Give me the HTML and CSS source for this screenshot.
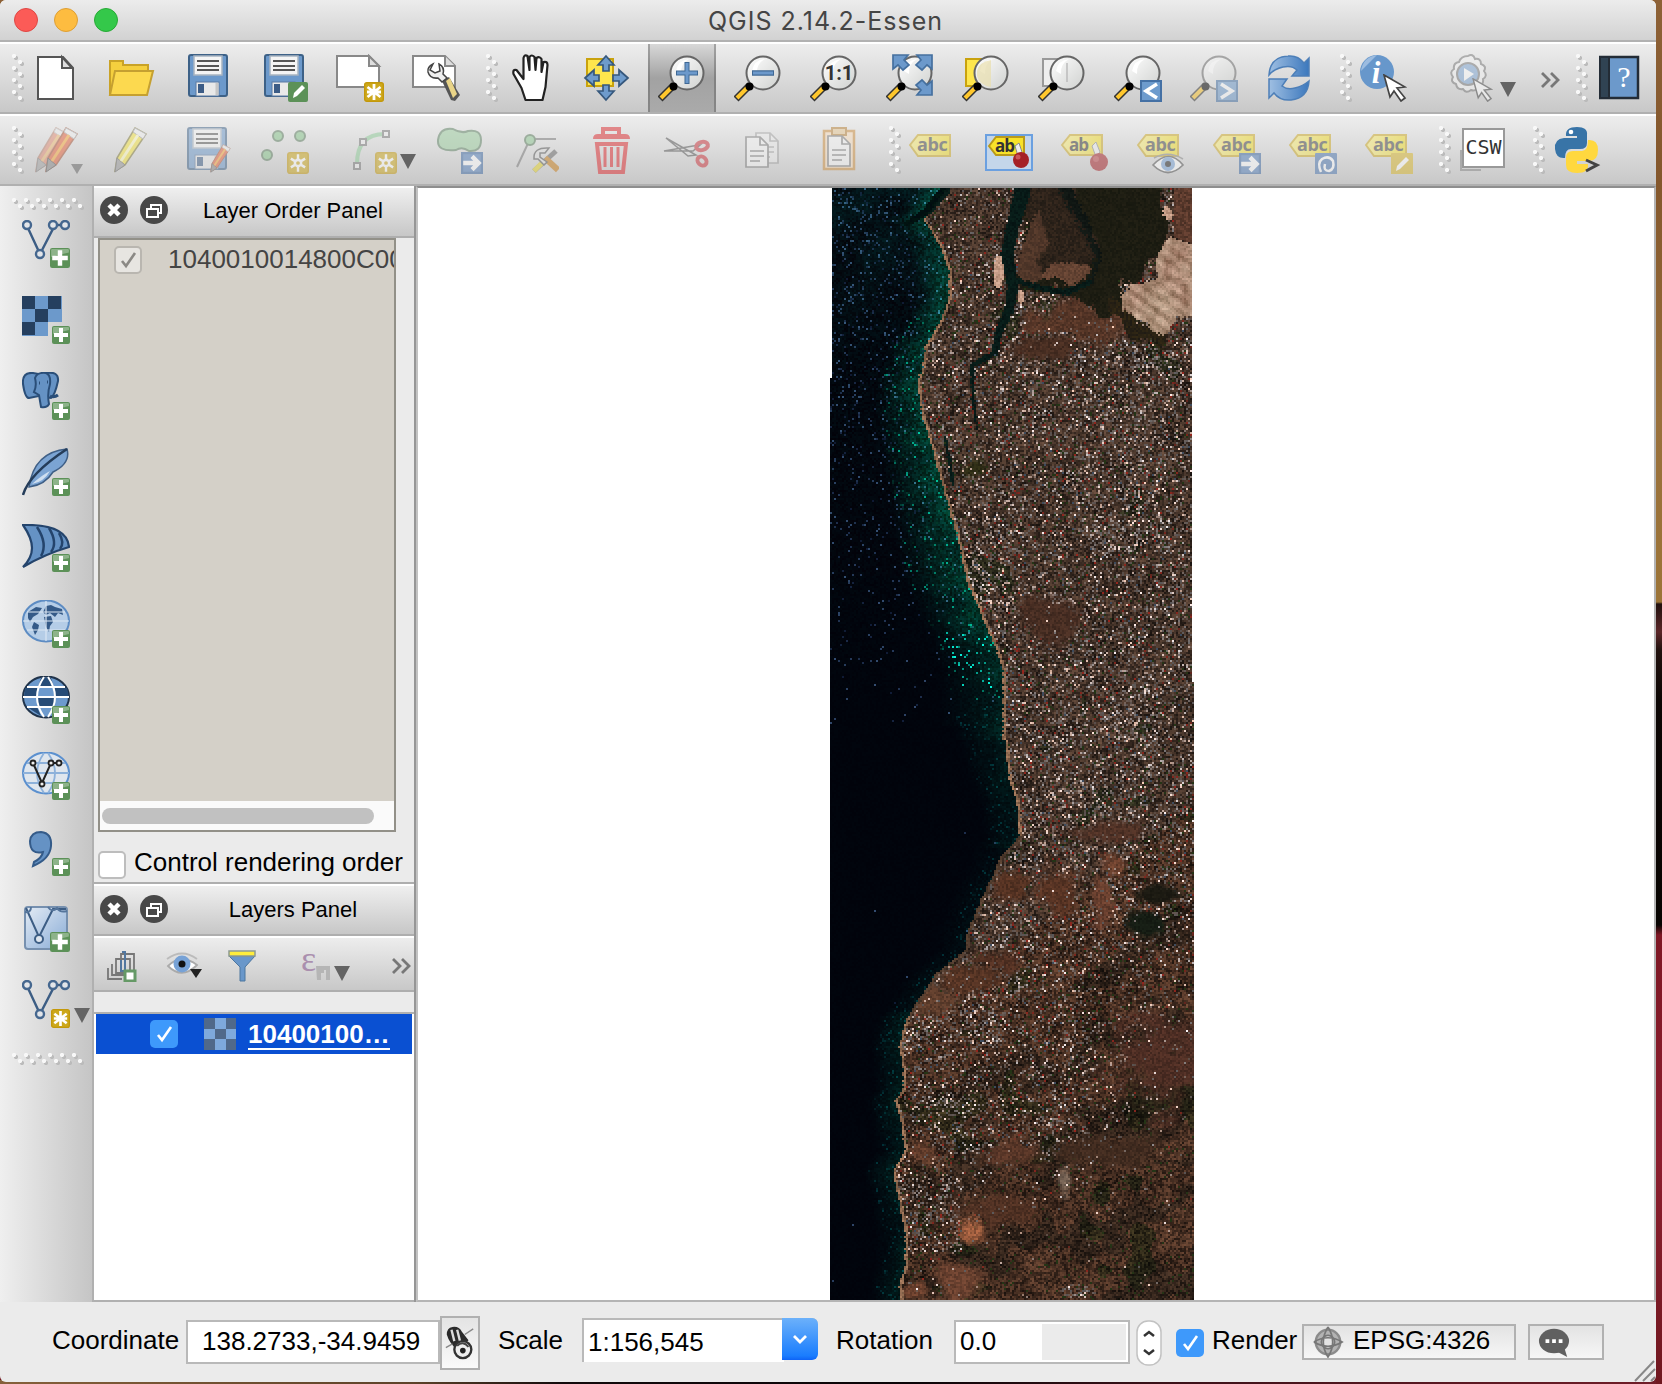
FILE: index.html
```
<!DOCTYPE html>
<html lang="en">
<head>
<meta charset="utf-8">
<title>QGIS 2.14.2-Essen</title>
<link rel="stylesheet" href="styles.css">
</head>
<body>
<svg class="sprite" aria-hidden="true">
  <defs>
    <linearGradient id="lens" x1="0" y1="0" x2="1" y2="1"><stop offset="0" stop-color="#fff"/><stop offset="1" stop-color="#cfd1cf"/></linearGradient>
    <linearGradient id="labelFill" x1="0" y1="0" x2="1" y2="0"><stop offset="0" stop-color="#fbee7e"/><stop offset="1" stop-color="#f2dc22"/></linearGradient>
    <linearGradient id="sky" x1="0" y1="0" x2="1" y2="1"><stop offset="0" stop-color="#e4ecf5"/><stop offset="1" stop-color="#88abd6"/></linearGradient>
    <linearGradient id="arrowBlue" x1="0" y1="0" x2="1" y2="0"><stop offset="0" stop-color="#9fbfe2"/><stop offset="1" stop-color="#3c78bd"/></linearGradient>
  </defs>
  <symbol id="badge-plus" viewBox="0 0 18 18"><rect width="18" height="18" rx="2" fill="#5c9158"/><path d="M1 8V2q0-1 1-1h14q1 0 1 1v2z" fill="#8db38a"/><path d="M9 2v14M2 9h14" stroke="#fff" stroke-width="4"/></symbol>
  <symbol id="badge-star" viewBox="0 0 20 20"><rect x=".7" y=".7" width="18.600" height="18.600" rx="2" fill="#cda81c" stroke="#c3980a" stroke-width="1.400"/><path d="M10 2v16M3.500 5l13 10M16.500 5l-13 10M3 10h14" stroke="#fff" stroke-width="2.800"/></symbol>
  <symbol id="badge-sun" viewBox="0 0 20 20"><rect x=".7" y=".7" width="18.600" height="18.600" rx="2" fill="#cda81c" stroke="#c3980a" stroke-width="1.400"/><path d="M10 2v16M3.500 6l13 8M16.500 6l-13 8" stroke="#fff" stroke-width="2.200"/><circle cx="10" cy="10" r="4" fill="#fff"/><circle cx="10" cy="10" r="1.700" fill="#cda81c"/></symbol>
  <symbol id="badge-right" viewBox="0 0 20 20"><rect x="1" y="1" width="18" height="18" fill="#5480bb" stroke="#3d68a2" stroke-width="2"/><path d="M2 10h13M10 4l6 6-6 6" fill="none" stroke="#fff" stroke-width="4"/></symbol>
  <symbol id="glass" viewBox="0 0 48 48"><path d="M2 45L16 31" stroke="#333" stroke-width="7"/><path d="M3 44L13 34" stroke="#ffc72c" stroke-width="4"/><circle cx="29" cy="19" r="16.500" fill="url(#lens)" stroke="#666" stroke-width="2"/><path d="M18 17q2-11 13-12-9 5-8 15z" fill="#fff"/><circle cx="15.500" cy="32.500" r="4" fill="#000"/></symbol>
  <symbol id="floppy" viewBox="0 0 48 48"><rect x="5" y="1" width="38" height="41" rx="2" fill="#6c99cb" stroke="#3d6187" stroke-width="2"/><rect x="10" y="2" width="28" height="19" fill="#f4f4f4" stroke="#a8b4c1" stroke-width="1.500"/><path d="M13 7h22M13 12h22M13 16h22" stroke="#555" stroke-width="2"/><rect x="12" y="28" width="23" height="14" fill="#e9e9e9" stroke="#5a7ba3"/><rect x="14" y="30" width="6" height="9" fill="#3c5c86"/><path d="M33 29v12" stroke="#c6c6c6" stroke-width="3"/></symbol>

  <symbol id="new" viewBox="0 0 48 48"><path d="M6 3h25l10 11v31H6z" fill="#fff" stroke="#555" stroke-width="2"/><path d="M30 3v11h10z" fill="#ddd" stroke="#555" stroke-width="2"/></symbol>
  <symbol id="open" viewBox="0 0 48 48"><path d="M2 41V7h13v4h25v7" fill="#f5cf3e" stroke="#c9a227" stroke-width="2"/><path d="M7 17h38l-6 24H2z" fill="#fcd94f" stroke="#c5a031" stroke-width="2"/></symbol>
  <symbol id="saveas" viewBox="0 0 48 48"><use href="#floppy"/><rect x="28" y="28" width="20" height="20" rx="2" fill="#5c9158"/><path d="M33 44l1-5 8-8 3 3-8 8z" fill="#fff"/></symbol>
  <symbol id="composer" viewBox="0 0 48 48"><path d="M1 2h32l10 10v21H1z" fill="#fff" stroke="#888" stroke-width="2"/><path d="M33 2v10h10z" fill="#ddd" stroke="#888" stroke-width="2"/><use href="#badge-star" x="28" y="28" width="20" height="20"/></symbol>
  <symbol id="manager" viewBox="0 0 48 48"><path d="M1 2h32l10 10v21H1z" fill="#fff" stroke="#888" stroke-width="2"/><path d="M33 2v10h10" fill="#ddd" stroke="#888" stroke-width="2"/><path d="M30 27l7-4 11 18-5 6-4-1z" fill="#555"/><path d="M34 27l4-3 7 16-4 4z" fill="#e9d487"/><path d="M21 10q-6 3-5 8 2 7 10 6l4 4 5-4-4-4q2-7-4-10l1 7-5 2-5-3z" fill="#eee" stroke="#444" stroke-width="1.500"/></symbol>
  <symbol id="hand" viewBox="0 0 48 48"><path transform="translate(2.500 0)" d="M17 46l-4-12-8-14q-1-5 3-4l7 9V4q1-4 4-2l2 14V3q2-3 5 0l1 13 1-12q3-2 5 1v13l2-10q4-1 4 3l-2 22-3 13z" fill="#fff" stroke="#222" stroke-width="2.200" stroke-linejoin="round"/></symbol>
  <symbol id="pan" viewBox="0 0 48 48"><rect x="5" y="5" width="26" height="27" fill="#fee64d" stroke="#c9a20d" stroke-width="2"/><g fill="#6e9bcc" stroke="#36587d" stroke-width="1.700"><path d="M24 2l8 9h-5v6h-6v-6h-5z"/><path d="M24 46l8-9h-5v-6h-6v6h-5z"/><path d="M3 24l9-8v5h5v6h-5v5z"/><path d="M46 24l-9-8v5h-6v6h6v5z"/></g></symbol>
  <symbol id="zoomin" viewBox="0 0 48 48"><use href="#glass"/><path d="M29 8v22M18 19h22" stroke="#3f6894" stroke-width="5"/><path d="M29 9v20M19 19h20" stroke="#6c99cb" stroke-width="3"/></symbol>
  <symbol id="zoomout" viewBox="0 0 48 48"><use href="#glass"/><path d="M18 19h22" stroke="#3f6894" stroke-width="5.500"/><path d="M19 19h20" stroke="#6c99cb" stroke-width="3"/></symbol>
  <symbol id="zoomfull" viewBox="0 0 48 48"><use href="#glass"/><g fill="#6c99cb" stroke="#45709f" stroke-width="1.700"><path d="M7 1h15l-4 5 5 5-6 5-5-5-5 4z"/><path d="M46 1H31l4 5-5 5 6 5 5-5 5 4z"/><path d="M46 41H31l4-5-5-5 6-5 5 5 5-4z"/></g></symbol>
  <symbol id="zoomsel" viewBox="0 0 48 48"><rect x="4" y="5" width="26" height="27" fill="#fee64d" stroke="#c9a20d" stroke-width="2"/><use href="#glass"/><path d="M15 17q2-9 14-11v27q-12-2-14-11z" fill="#e8dfb0" opacity=".75"/></symbol>
  <symbol id="zoomlayer" viewBox="0 0 48 48"><rect x="5" y="5" width="26" height="27" fill="#eee" stroke="#999" stroke-width="2"/><use href="#glass"/><path d="M29 9v19" stroke="#bbb" stroke-width="1.500"/></symbol>
  <symbol id="zoomlast" viewBox="0 0 48 48"><use href="#glass"/><rect x="27" y="27" width="20" height="20" fill="#6d9bcd" stroke="#4470a4" stroke-width="2"/><path d="M43 30l-11 7 11 7" fill="none" stroke="#fff" stroke-width="3.500"/></symbol>
  <symbol id="zoomnext" viewBox="0 0 48 48"><use href="#glass"/><rect x="27" y="27" width="20" height="20" fill="#6d9bcd" stroke="#4470a4" stroke-width="2"/><path d="M31 30l11 7-11 7" fill="none" stroke="#fff" stroke-width="3.500"/></symbol>
  <symbol id="refresh" viewBox="0 0 48 48"><path d="M3 21Q4 3 22 2q10-1 16 7l5-5v18H26l5-6q-5-5-14-3T3 21z" fill="url(#arrowBlue)" stroke="#4d7fb8" stroke-width="1.500"/><path d="M43 27Q42 44 25 46 14 47 8 39l-5 5V25h18l-5 7q5 4 13 2t14-7z" fill="url(#arrowBlue)" stroke="#4d7fb8" stroke-width="1.500"/></symbol>
  <symbol id="cursor" viewBox="0 0 24 28"><path d="M1 1l21 12-8 1 8 10-4 3-7-10-4 6z" fill="#fff" stroke="#444" stroke-width="1.700"/></symbol>
  <symbol id="identify" viewBox="0 0 48 48"><circle cx="17" cy="18" r="17" fill="#6797cb"/><path d="M1 17Q3 3 17 1q-8 8-16 16z" fill="#9cbce0"/></symbol>
  <symbol id="action" viewBox="0 0 48 48"><path d="M20 2q5-3 7 3 6-1 6 5 6 2 3 7 4 5-1 8 1 6-5 7-2 6-7 4-5 4-8-1-6 1-7-5-6-2-3-7-4-5 1-8-1-6 5-7 2-6 9-6z" fill="#f4f4f4" stroke="#777" stroke-width="2"/><circle cx="20" cy="20" r="11" fill="#7ea6d4" stroke="#777" stroke-width="2"/><path d="M16 14l10 6-10 7z" fill="#fff"/><use href="#cursor" x="24" y="24" width="21" height="24"/></symbol>
  <symbol id="help" viewBox="0 0 48 48"><rect x="1" y="3" width="38" height="41" fill="#6c99cb" stroke="#232c36" stroke-width="2.500"/><path d="M1 3h9v41H1z" fill="#304353" stroke="#232c36" stroke-width="2"/></symbol>

  <symbol id="pencil" viewBox="0 0 48 48"><path d="M26 2l11 6-21 31-10 6 2-13z" fill="#f4e33f" stroke="#817a37" stroke-width="1.500"/><path d="M26 2l11 6-3 5-10-7z" fill="#eee" stroke="#999"/><path d="M8 32l8 7-10 7z" fill="#999" stroke="#666"/><path d="M29 9L12 35" stroke="#fffbc0" stroke-width="3"/></symbol>
  <symbol id="redpencil" viewBox="0 0 48 48"><path d="M26 2l11 6-21 31-10 6 2-13z" fill="#e3603a" stroke="#a65234" stroke-width="1.500"/><path d="M26 2l11 6-3 5-10-7z" fill="#eee" stroke="#aaa"/><path d="M8 32l8 7-10 7z" fill="#888" stroke="#555"/><path d="M29 9L12 35" stroke="#f7a93a" stroke-width="3"/></symbol>
  <symbol id="edits" viewBox="0 0 48 48"><g opacity=".65"><use href="#redpencil" x="-2" y="0"/></g><use href="#redpencil" x="8"/></symbol>
  <symbol id="saveedits" viewBox="0 0 48 48"><g transform="translate(-2 1)"><use href="#floppy"/></g><use href="#redpencil" x="22" y="17" width="30" height="31"/></symbol>
  <symbol id="points" viewBox="0 0 48 48"><g fill="#86c58a" stroke="#5b7c5e" stroke-width="2"><circle cx="17" cy="10" r="5"/><circle cx="39" cy="10" r="5"/><circle cx="6" cy="29" r="5"/></g><use href="#badge-sun" x="26" y="26" width="22" height="22"/></symbol>
  <symbol id="line" viewBox="0 0 48 48"><path d="M8 38Q8 8 36 8" fill="none" stroke="#8ecb98" stroke-width="4"/><g fill="#eee" stroke="#777" stroke-width="2"><path d="M5 37h6v6H5zM11 13h6v6h-6zM34 5h6v6h-6z"/></g><use href="#badge-sun" x="26" y="26" width="22" height="22"/></symbol>
  <symbol id="blob" viewBox="0 0 48 48"><path d="M3 14Q5 1 18 3q9 5 15 2 13-2 13 9 0 12-12 11-7-5-13-1Q2 26 3 14z" fill="#9bce9e" stroke="#5d8162" stroke-width="2"/><use href="#badge-right" x="26" y="26" width="22" height="22"/></symbol>
  <symbol id="node" viewBox="0 0 48 48"><path d="M6 41L19 13h26" fill="none" stroke="#777" stroke-width="2"/><circle cx="19" cy="14" r="5" fill="#8ec792" stroke="#587a5a" stroke-width="2"/><path d="M23 45l22-20" stroke="#666" stroke-width="5"/><path d="M23 45l9-9" stroke="#e5d32d" stroke-width="5"/><path d="M34 32l13 12" stroke="#c77c17" stroke-width="6"/><path d="M23 33q-1-12 15-11l-4 5h-5v4l7 5-3 3-6-6z" fill="#ddd" stroke="#555" stroke-width="1.500"/></symbol>
  <symbol id="trash" viewBox="0 0 48 48"><g fill="none" stroke="#dd2a2e" stroke-width="4"><path d="M16 9V3h16v6M10 18l3 28h23l3-28z"/><path d="M18 21v20M24.500 21v20M31 21v20" stroke-width="3"/></g><path d="M6 13q0-5 5-5h27q5 0 5 5z" fill="#dd2a2e"/></symbol>
  <symbol id="scissors" viewBox="0 0 48 48"><path d="M3 12l30 17-8 1zM1 25l29 0 7-6-7 1z" fill="#ddd" stroke="#555" stroke-width="1.500"/><g fill="none" stroke="#ca343c" stroke-width="4"><ellipse cx="39" cy="20" rx="6" ry="4" transform="rotate(-15 39 20)"/><ellipse cx="39" cy="35" rx="5" ry="4" transform="rotate(45 39 35)"/></g></symbol>
  <symbol id="page" viewBox="0 0 24 32"><path d="M1 1h14l8 8v22H1z" fill="#f5f5f5" stroke="#777" stroke-width="1.700"/><path d="M15 1v8h8M5 15h14M5 20h14M5 25h10" fill="none" stroke="#777" stroke-width="1.700"/></symbol>
  <symbol id="copy" viewBox="0 0 48 48"><g opacity=".6"><use href="#page" x="16" y="6" width="24" height="32"/></g><use href="#page" x="6" y="10" width="24" height="32"/></symbol>
  <symbol id="paste" viewBox="0 0 48 48"><path d="M9 5h30v38H9z" fill="#f7ddbd" stroke="#cc8d3d" stroke-width="2.500"/><path d="M17 2h14v7H17z" fill="#e5c691" stroke="#b57e34" stroke-width="2"/><use href="#page" x="12" y="9" width="24" height="32"/></symbol>
  <symbol id="label" viewBox="0 0 48 48"><path d="M1 19L9 9h32v21H9z" fill="url(#labelFill)" stroke="#cda923" stroke-width="2"/></symbol>
  <symbol id="labelshort" viewBox="0 0 48 48"><path d="M1 19L9 9h32v20H9z" fill="url(#labelFill)" stroke="#cda923" stroke-width="2"/><path d="M31 20l4-4 4 10-4 5z" fill="#eee" stroke="#888"/><circle cx="38" cy="36" r="9" fill="#a52127"/><circle cx="35" cy="33" r="3" fill="#bd4449"/></symbol>
  <symbol id="labelpin" viewBox="0 0 48 48"><rect x="1" y="9" width="46" height="35" fill="#c4d6ea" stroke="#6ba0e0" stroke-width="2"/><path d="M4 20l7-9h28v18H11z" fill="#f8e229" stroke="#b99a1c" stroke-width="2"/><path d="M30 20l4-3 3 9-4 4z" fill="#eee" stroke="#888"/><circle cx="36" cy="34" r="8" fill="#a52127"/><circle cx="33" cy="31" r="2.500" fill="#c9555a"/></symbol>
  <symbol id="labeleye" viewBox="0 0 48 48"><use href="#label"/><path d="M16 39q16-17 30 0-15 15-30 0z" fill="#fff" stroke="#555" stroke-width="1.700"/><circle cx="31" cy="38" r="7" fill="#79a4d8"/><circle cx="31" cy="38" r="3" fill="#222"/><path d="M17 32q14-8 29 1" fill="none" stroke="#888" stroke-width="1.500"/></symbol>
  <symbol id="labelmove" viewBox="0 0 48 48"><use href="#label"/><use href="#badge-right" x="26" y="27" width="22" height="22"/></symbol>
  <symbol id="labelrot" viewBox="0 0 48 48"><use href="#label"/><rect x="26" y="27" width="22" height="22" rx="1" fill="#4c76b0"/><path d="M32 46q-4-9 1-13 7-4 11 2 2 8-4 10-6 0-4-7" fill="none" stroke="#fff" stroke-width="2.500"/></symbol>
  <symbol id="labeledit" viewBox="0 0 48 48"><use href="#label"/><rect x="26" y="27" width="22" height="22" rx="1" fill="#d8b72d"/><path d="M31 45l1-5 9-9 3 3-9 9z" fill="#fff"/></symbol>
  <symbol id="csw" viewBox="0 0 48 48"><path d="M2 24v20h20" fill="none" stroke="#aaa" stroke-width="2"/><rect x="4" y="3" width="41" height="38" fill="#fff" stroke="#999" stroke-width="2"/></symbol>
  <symbol id="python" viewBox="0 0 48 48"><path d="M13 10q-1-9 11-9 11 0 10 8v8q0 6-7 6H18q-6 0-6 9-9 1-10-9-1-10 9-11h13v-2z" fill="#3874a7"/><circle cx="18" cy="6" r="2.300" fill="#fff"/><path d="M35 14q10-1 10 10t-9 11H24v3h11q1 9-11 9-11 0-11-8v-7q0-7 7-7h9q6 0 6-11z" fill="#ffd83f"/><path d="M33 34l11 5-11 6" fill="none" stroke="#444" stroke-width="3"/></symbol>

  <symbol id="vee" viewBox="0 0 48 48"><path d="M5 6l13 28L33 5h12" fill="none" stroke="#3c5d84" stroke-width="2.400"/><g fill="#e2e5e9" stroke="#45678f" stroke-width="2.400"><circle cx="5" cy="5" r="4"/><circle cx="18" cy="34" r="4"/><circle cx="31" cy="5" r="4"/><circle cx="43" cy="5" r="4"/></g></symbol>
  <symbol id="vector" viewBox="0 0 48 48"><use href="#vee"/><use href="#badge-plus" x="28" y="28" width="20" height="20"/></symbol>
  <symbol id="checker" viewBox="0 0 48 48"><path fill="#6c99cb" d="M0 0h40v26H26v14H0z"/><path fill="#253f5f" d="M0 0h13v13H0zM26 0h13v13H26zM13 13h13v13H13zM0 26h13v13H0z"/></symbol>
  <symbol id="raster" viewBox="0 0 48 48"><use href="#checker"/><use href="#badge-plus" x="30" y="30" width="18" height="18"/></symbol>
  <symbol id="postgis" viewBox="0 0 48 48"><g fill="#6592c4" stroke="#2a4e78" stroke-width="2"><path d="M11 1Q0 0 1 12q2 14 6 14l10-2V2z"/><path d="M24 1q13-2 12 8-3 14-7 17l-8-1z"/><path d="M13 6q2-6 11-5 5 2 4 11-3 10-1 20-2 4-8 3l-2-12-5-3q3-6 1-14z"/></g><path d="M28 24q4 2 8-1" fill="none" stroke="#2a4e78" stroke-width="3"/><path d="M17 11h1M25 10h1" stroke="#2a4e78" stroke-width="3"/><use href="#badge-plus" x="30" y="30" width="18" height="18"/></symbol>
  <symbol id="feather" viewBox="0 0 48 48"><path d="M45 1Q49 15 31 24 23 37 7 39 12 4 45 1z" fill="#7ba4d3" stroke="#3f5f86" stroke-width="1.500"/><path d="M10 36q12-2 18-13-8 4-18 13z" fill="#cfdff0"/><path d="M1 47Q7 26 45 1" fill="none" stroke="#253d5a" stroke-width="2.500"/><use href="#badge-plus" x="30" y="30" width="18" height="18"/></symbol>
  <symbol id="sail" viewBox="0 0 48 48"><path d="M1 1q44-1 46 22-24 7-46 20 9-9 9-19T1 1z" fill="#6592c4" stroke="#24446c" stroke-width="2.200"/><path d="M15 3q11 17 4 29M27 4q9 15 2 24M37 9q6 10 1 16" fill="none" stroke="#24446c" stroke-width="2.500"/><use href="#badge-plus" x="30" y="30" width="18" height="18"/></symbol>
  <symbol id="wms" viewBox="0 0 48 48"><ellipse cx="24" cy="21" rx="23" ry="20.500" fill="#b5cde7" stroke="#5d8cc3" stroke-width="2"/><path d="M6 12l8-5 6 1-4 6-5 3-3 5-2-4zM12 22l5 3-1 5-3 5-3-8zM24 6l5-1 4 2 7 2 1 6-5-2-3 4-5-4-4 2-3-3zM22 17l7-1 2 6-3 4-1 6-3-5z" fill="#345a88"/><path d="M1 21h46M5 12h38M5 30h38M24 1v40" stroke="#dbe7f4" stroke-width="1.200"/><use href="#badge-plus" x="30" y="30" width="18" height="18"/></symbol>
  <symbol id="wcs" viewBox="0 0 48 48"><ellipse cx="24" cy="21" rx="23" ry="20.500" fill="#6d9acd" stroke="#20334a" stroke-width="2"/><path d="M3 12h12v9H2zM33 12h12l2 9H33zM15 21h18v10H15zM5 31h10l4 9zM19 2h10l3 9H16z" fill="#274c77"/><g fill="none" stroke="#fff" stroke-width="2"><path d="M1 21h46M5 11h38M5 31h38M22 1q-14 20 0 40M26 1q14 20 0 40"/></g><use href="#badge-plus" x="30" y="30" width="18" height="18"/></symbol>
  <symbol id="wfs" viewBox="0 0 48 48"><ellipse cx="24" cy="21" rx="23" ry="20.500" fill="#dfe6ee" stroke="#5b90cf" stroke-width="2"/><path d="M1 21h46M5 11h38M5 31h38M22 1q-14 20 0 40M26 1q14 20 0 40" fill="none" stroke="#8db1da" stroke-width="1.800"/><path d="M11 11l9 20 9-20h8" fill="none" stroke="#222" stroke-width="2"/><g fill="#eee" stroke="#222" stroke-width="1.800"><circle cx="11" cy="11" r="2.500"/><circle cx="20" cy="32" r="2.500"/><circle cx="29" cy="11" r="2.500"/><circle cx="37" cy="11" r="2.500"/></g><use href="#badge-plus" x="30" y="30" width="18" height="18"/></symbol>
  <symbol id="comma" viewBox="0 0 48 48"><path d="M8 13Q9 4 19 4q11 1 10 14-1 13-18 20l1-4q8-4 9-10-13 3-13-11z" fill="#6592c4" stroke="#345b89" stroke-width="2"/><use href="#badge-plus" x="30" y="30" width="18" height="18"/></symbol>
  <symbol id="virtual" viewBox="0 0 48 48"><rect x="3" y="3" width="42" height="42" rx="3" fill="url(#sky)" stroke="#7690af" stroke-width="2"/><path d="M4 4l13 29L31 5h13" fill="none" stroke="#3c5d84" stroke-width="2"/><circle cx="17" cy="35" r="4" fill="#dde5ee" stroke="#3c5d84" stroke-width="2"/><path d="M3 8q6 1 6-5M26 3q4 6 9 1 3 5 10 3" fill="none" stroke="#55759b" stroke-width="2"/><use href="#badge-plus" x="28" y="28" width="20" height="20"/></symbol>
  <symbol id="newshape" viewBox="0 0 48 48"><use href="#vee"/><use href="#badge-star" x="29" y="29" width="19" height="19"/></symbol>

  <symbol id="close" viewBox="0 0 28 28"><circle cx="14" cy="14" r="14" fill="#484848"/><path d="M9 9l10 10M19 9L9 19" stroke="#fff" stroke-width="4.500"/></symbol>
  <symbol id="float" viewBox="0 0 28 28"><circle cx="14" cy="14" r="14" fill="#484848"/><path d="M11 12V9h10v8h-3M7 13h11v8H7z" fill="none" stroke="#fff" stroke-width="2"/></symbol>
  <symbol id="check" viewBox="0 0 28 28"><path d="M8 15l4 5 9-13" fill="none" stroke="currentColor" stroke-width="2.600"/></symbol>
  <symbol id="more" viewBox="0 0 22 16"><path d="M2 1l7 7-7 7M11 1l7 7-7 7" fill="none" stroke="#777" stroke-width="2.800"/></symbol>
</svg>

<div class="window">
  <header class="titlebar">
    <div class="lights"><i class="red"></i><i class="amber"></i><i class="green"></i></div>
    <h1>QGIS 2.14.2-Essen</h1>
  </header>

  <nav class="toolbar">
    <span class="grip"></span>
    <svg class="tool"><use href="#new"/></svg><svg class="tool"><use href="#open"/></svg><svg class="tool"><use href="#floppy"/></svg><svg class="tool"><use href="#saveas"/></svg><svg class="tool"><use href="#composer"/></svg><svg class="tool"><use href="#manager"/></svg>
    <span class="grip mid"></span>
    <svg class="tool"><use href="#hand"/></svg><svg class="tool"><use href="#pan"/></svg><span class="active"><svg class="tool"><use href="#zoomin"/></svg></span><svg class="tool"><use href="#zoomout"/></svg><svg class="tool"><use href="#glass"/><text x="29" y="26" text-anchor="middle" class="one">1:1</text></svg><svg class="tool"><use href="#zoomfull"/></svg><svg class="tool"><use href="#zoomsel"/></svg><svg class="tool"><use href="#zoomlayer"/></svg><svg class="tool"><use href="#zoomlast"/></svg><svg class="tool off"><use href="#zoomnext"/></svg><svg class="tool"><use href="#refresh"/></svg>
    <span class="grip info-grip"></span>
    <svg class="tool wide"><use href="#identify"/><text x="16" y="29" text-anchor="middle" class="info">i</text><use href="#cursor" x="23" y="20" width="24" height="28"/></svg><svg class="tool off tight"><use href="#action"/></svg><i class="drop"></i>
    <svg class="more"><use href="#more"/></svg>
    <span class="grip help-grip"></span>
    <svg class="tool"><use href="#help"/><text x="25" y="33" text-anchor="middle" class="question">?</text></svg>
  </nav>

  <nav class="toolbar second">
    <span class="grip"></span>
    <span class="dropped off"><svg class="tool"><use href="#edits"/></svg><i class="drop small"></i></span><svg class="tool off"><use href="#pencil"/></svg><svg class="tool off"><use href="#saveedits"/></svg><svg class="tool off wide"><use href="#points"/></svg><svg class="tool off line"><use href="#line"/></svg><i class="drop"></i><svg class="tool off blob"><use href="#blob"/></svg><svg class="tool off"><use href="#node"/></svg><svg class="tool off"><use href="#trash"/></svg><svg class="tool off"><use href="#scissors"/></svg><svg class="tool off"><use href="#copy"/></svg><svg class="tool off"><use href="#paste"/></svg>
    <span class="grip label-grip"></span>
    <svg class="tool off"><use href="#label"/><text x="8" y="25" class="abc">abc</text></svg><svg class="tool"><use href="#labelpin"/><text x="10" y="26" class="ab">ab</text></svg><svg class="tool off"><use href="#labelshort"/><text x="8" y="25" class="ab">ab</text></svg><svg class="tool off"><use href="#labeleye"/><text x="8" y="25" class="abc">abc</text></svg><svg class="tool off"><use href="#labelmove"/><text x="8" y="25" class="abc">abc</text></svg><svg class="tool off"><use href="#labelrot"/><text x="8" y="25" class="abc">abc</text></svg><svg class="tool off"><use href="#labeledit"/><text x="8" y="25" class="abc">abc</text></svg>
    <span class="grip csw-grip"></span>
    <svg class="tool"><use href="#csw"/><text x="6.500" y="28" class="csw">CSW</text></svg>
    <span class="grip py-grip"></span>
    <svg class="tool"><use href="#python"/></svg>
  </nav>

  <main class="workspace">
    <aside class="sidebar">
      <span class="hgrip"></span>
      <svg class="side"><use href="#vector"/></svg><svg class="side"><use href="#raster"/></svg><svg class="side"><use href="#postgis"/></svg><svg class="side"><use href="#feather"/></svg><svg class="side"><use href="#sail"/></svg><svg class="side"><use href="#wms"/></svg><svg class="side"><use href="#wcs"/></svg><svg class="side"><use href="#wfs"/></svg><svg class="side"><use href="#comma"/></svg><svg class="side"><use href="#virtual"/></svg>
      <span class="side-drop"><svg class="side"><use href="#newshape"/></svg><i class="drop"></i></span>
      <span class="hgrip last"></span>
    </aside>

    <section class="docks">
      <div class="dock-title"><svg><use href="#close"/></svg><svg><use href="#float"/></svg><h2>Layer Order Panel</h2></div>
      <div class="order-list">
        <div class="order-item"><span class="box disabled"><svg><use href="#check"/></svg></span><span>1040010014800C00</span></div>
        <div class="scroll"><i></i></div>
      </div>
      <label class="control"><span class="box"></span>Control rendering order</label>
      <div class="dock-title lower"><svg><use href="#close"/></svg><svg><use href="#float"/></svg><h2>Layers Panel</h2></div>
      <div class="layer-tools">
        <svg viewBox="0 0 30 32" class="lt group"><path d="M1 18v11h14M5 14v11h12M9 9h14v14H9zM14 9V4h13v17h-4" fill="none" stroke="#777" stroke-width="1.800"/><path d="M14 10v11h4V2h-3" fill="none" stroke="#52779f" stroke-width="2"/><rect x="18" y="21" width="10" height="10" fill="#fff" stroke="#659966" stroke-width="3"/></svg>
        <svg viewBox="0 0 36 30" class="lt eye"><path d="M2 15Q15 2 31 14 16 29 2 15z" fill="#fff" stroke="#aaa" stroke-width="1.800"/><path d="M1 8Q16-3 31 8" fill="none" stroke="#bbb" stroke-width="1.800"/><circle cx="16" cy="13" r="8.500" fill="#77a2d6"/><circle cx="16" cy="13" r="3.500" fill="#111"/><path d="M24 18h12l-6 9z" fill="#222"/></svg>
        <svg viewBox="0 0 28 32" class="lt funnel"><path d="M1 6h26L17 17v14h-5V17z" fill="#6997ca" stroke="#4c769f"/><path d="M1 1h26v5H1z" fill="#ffed3c" stroke="#8d9a91" stroke-width="1.500"/></svg>
        <svg viewBox="0 0 30 34" class="lt eps"><text x="-1" y="22" class="epsilon">ε</text><path d="M14 17h14v14h-4v-10h-2v3h-3v7h-4z" fill="#b5b5b5"/></svg>
        <i class="drop"></i>
        <svg class="more"><use href="#more"/></svg>
      </div>
      <div class="tree">
        <div class="tree-row"><span class="box checked"><svg><use href="#check"/></svg></span>
          <svg class="layer-icon" viewBox="0 0 32 32"><path fill="#7ea9dc" d="M0 0h32v32H0z"/><path fill="#50698a" d="M0 0h11v11H0zM22 0h10v11H22zM11 11h11v10H11zM0 21h11v11H0zM22 21h10v11H22z"/></svg>
          <b>10400100…</b></div>
      </div>
    </section>

    <div class="map"><canvas id="scene" width="182" height="556"></canvas></div>
  </main>

  <footer class="status">
    <span class="lbl coord">Coordinate</span><span class="field coordinate">138.2733,-34.9459</span>
    <span class="mouse"><svg viewBox="0 0 30 36"><path d="M1 9Q1 2 7 1q7-1 10 5l7 9-10 11Q4 20 1 9z" fill="#2b2b2b"/><path d="M6 4l3 12M12 4l3 12" stroke="#ddd" stroke-width="2.500"/><path d="M0 23l7-4M20 9l9-6" stroke="#888" stroke-width="1.500"/><circle cx="18" cy="25" r="9" fill="#eee" stroke="#333" stroke-width="2.500"/><path d="M12 21q6-6 12 1" fill="none" stroke="#444" stroke-width="2"/><circle cx="18" cy="26" r="3" fill="#222"/></svg></span>
    <span class="lbl scale">Scale</span><span class="combo"><span>1:156,545</span><i><svg viewBox="0 0 36 42"><path d="M12 18l6 6 6-6" fill="none" stroke="#fff" stroke-width="2.800"/></svg></i></span>
    <span class="lbl rotation">Rotation</span><span class="field rotate"><span>0.0</span><i></i></span>
    <svg class="stepper" viewBox="0 0 26 46"><rect x="1" y="1" width="24" height="44" rx="11" fill="#fff" stroke="#c2c2c2" stroke-width="1.500"/><path d="M8 16l5-4 5 4M8 30l5 4 5-4" fill="none" stroke="#333" stroke-width="2.500"/></svg>
    <span class="box checked"><svg><use href="#check"/></svg></span><span class="lbl render">Render</span>
    <span class="button epsg"><svg viewBox="0 0 32 34"><circle cx="16" cy="17" r="13" fill="#b3b3b3" stroke="#8b8b8b" stroke-width="2.500"/><circle cx="16" cy="17" r="7" fill="#e4e4e4" stroke="#777" stroke-width="2"/><path d="M16 1q-10 16 0 32 10-16 0-32M1 17q15-9 30 0-15 9-30 0" fill="none" stroke="#777" stroke-width="1.800"/></svg>EPSG:4326</span>
    <span class="button message"><svg viewBox="0 0 32 34"><ellipse cx="16" cy="16" rx="16" ry="13" fill="#606060"/><path d="M17 26l13 7-4-13z" fill="#606060"/><path d="M7 14h4v4H7zM14 14h4v4h-4zM21 14h4v4h-4z" fill="#fff"/></svg></span>
    <svg class="resize" viewBox="0 0 22 22"><path d="M1 21L20 1M9 21L21 9M17 21l4-4" stroke="#888" stroke-width="2"/></svg>
  </footer>
</div>
<script src="scene.js"></script>
</body>
</html>
```
FILE: styles.css
```
* { box-sizing: border-box; }
body {
  margin: 0;
  width: 1662px;
  height: 1384px;
  overflow: hidden;
  font: 26px/30px "Liberation Sans", Arial, sans-serif;
  color: #000;
  background:
    linear-gradient(90deg, #86603a 0, #5d4229 25%, #120a0c 34%, #0a0407 55%, #3a1118 70%, #701d28) 0 100% / 1656px 4px no-repeat,
    linear-gradient(#8d6136 0, #84572c 180px, #99703b 420px, #9c7437 602px, #21110e 604px, #5a2527 632px, #21110e 650px, #0c0604 700px, #080402 925px, #7e1724 935px, #8c1e2e 1160px, #701820 1384px);
}
h1, h2 { margin: 0; font-weight: 400; }
svg { display: block; flex: none; }
i { display: block; flex: none; }
.sprite { position: absolute; width: 0; height: 0; }

.window {
  width: 1656px;
  height: 1382px;
  border-radius: 6px;
  overflow: hidden;
  background: #ebebeb;
  display: flex;
  flex-direction: column;
}

/* title bar */
.titlebar {
  flex: none;
  height: 42px;
  display: grid;
  grid-template-columns: 200px 1fr 205px;
  align-items: center;
  background: linear-gradient(#ececec, #d2d2d2);
  border-bottom: 2px solid #b1b1b1;
}
.lights { display: flex; gap: 16px; padding-left: 14px; }
.lights i { width: 24px; height: 24px; border-radius: 50%; }
.red { background: #fc5b57; border: 1px solid #df4744; }
.amber { background: #fdbc40; border: 1px solid #de9f34; }
.green { background: #34c84a; border: 1px solid #27aa35; }
h1 { text-align: center; font: 25px/30px Inter, Roboto, sans-serif; letter-spacing: 1px; color: #454545; padding-top: 2px; }

/* toolbars */
.toolbar {
  flex: none;
  height: 72px;
  display: flex;
  align-items: center;
  padding-left: 12px;
  background: linear-gradient(#ededed, #c8c8c8);
  border-top: 2px solid #fff;
  border-bottom: 2px solid #b0b0b0;
}
.tool { width: 48px; height: 48px; margin-right: 28px; overflow: visible; }
.off { opacity: .5; }
.grip {
  flex: none;
  width: 12px;
  height: 48px;
  margin-right: 8px;
}
.grip, .hgrip {
  background:
    radial-gradient(circle at 2px 2px, #f8f8f8 1.800px, transparent 2.400px) 0 0 / 12px 12px,
    radial-gradient(circle at 4px 4px, #bbb 1.800px, transparent 2.400px) 0 0 / 12px 12px,
    radial-gradient(circle at 8px 8px, #f8f8f8 1.800px, transparent 2.400px) 0 0 / 12px 12px,
    radial-gradient(circle at 10px 10px, #bbb 1.800px, transparent 2.400px) 0 0 / 12px 12px;
}
.mid { margin-left: -2px; }
.active {
  flex: none;
  display: flex;
  align-items: center;
  width: 68px;
  height: 68px;
  margin: 0 18px 0 -10px;
  padding-left: 10px;
  border: solid rgba(70, 70, 70, .35);
  border-width: 0 2px;
  background: linear-gradient(#d8d8d8, #a2a2a2 50%, #aaa);
}
.active .tool { margin-left: -2px; margin-right: 0; }
.info-grip { margin-left: -2px; }
.wide { margin-right: 40px; }
.tight { margin-right: 4px; }
.drop { border: 8px solid transparent; border-top: 15px solid #646464; border-bottom: 0; margin-top: 22px; }
.toolbar .more { width: 22px; height: 16px; margin: 4px 14px 0 24px; }
.help-grip { margin-right: 11px; }
.one { font: bold 20px Roboto, sans-serif; fill: #333; }
.info { font: italic bold 31px "Liberation Serif", serif; fill: #fff; }
.question { font: 30px "Liberation Serif", serif; fill: #fff; }
.abc { font: bold 18px "Open Sans", sans-serif; letter-spacing: -.4px; fill: #444; }
.ab { font: bold 17px "Open Sans", sans-serif; letter-spacing: -.9px; fill: #333; }
.csw { font: 20px "DejaVu Sans Mono", monospace; fill: #333; }
.dropped { display: flex; flex: none; }
.dropped .tool { margin-right: 0; }
.small { border-width: 10px 6px 0; margin: 38px 26px 0 -9px; }
.line { margin-right: 3px; }
.blob { margin-left: 19px; }
.label-grip, .csw-grip, .py-grip { margin-left: -2px; }

/* workspace */
.workspace { flex: none; height: 1116px; display: flex; }
.sidebar {
  width: 94px;
  padding: 12px 0 0 12px;
  border-right: 2px solid #b0b0b0;
  background: linear-gradient(90deg, #efefef, #c5c5c5);
}
.hgrip {
  display: block;
  width: 72px;
  height: 12px;
  margin-bottom: 10px;
}
.side { width: 48px; height: 48px; margin: 0 0 28px 10px; }
.side-drop { display: flex; }
.side-drop .side { margin-bottom: 25px; }
.side-drop .drop { margin: 28px 0 0 4px; }

.docks { width: 322px; border-right: 2px solid #969696; display: flex; flex-direction: column; background: #ebebeb; }
.dock-title {
  flex: none;
  height: 52px;
  display: flex;
  align-items: center;
  gap: 12px;
  padding-left: 6px;
  border-top: 2px solid #fff;
  border-bottom: 2px solid #aeaeae;
  background: linear-gradient(#efefef, #c7c7c7);
}
.dock-title svg { width: 28px; height: 28px; margin-top: -4px; }
.dock-title h2 { flex: 1; text-align: center; font-size: 22px; line-height: 28px; margin: -3px 31px 0 23px; white-space: nowrap; }
.order-list {
  flex: none;
  width: 298px;
  height: 594px;
  margin-left: 4px;
  border: 2px solid #929088;
  background: #d4d0c8;
  display: flex;
  flex-direction: column;
  justify-content: space-between;
  overflow: hidden;
}
.order-item { display: flex; padding: 4px 0 0 14px; color: #444; white-space: nowrap; }
.order-item > span:last-child { margin-left: 26px; line-height: 31px; }
.box { flex: none; width: 28px; height: 28px; border-radius: 5px; background: #fff; border: 2px solid #bdbdbd; }
.box svg { width: 28px; height: 28px; margin: -2px; }
.box.checked { background: #3e99fb; border: 0; color: #fff; }
.box.checked svg { margin: 0; }
.box.disabled { background: #e7e5e1; border-color: #b9b6b0; color: #8b8985; margin-top: 2px; }
.scroll { height: 29px; padding: 7px 2px; background: #fafafa; }
.scroll i { width: 272px; height: 16px; border-radius: 8px; background: #c1c1c1; }
.control { flex: none; height: 52px; display: flex; gap: 8px; padding: 15px 0 0 4px; white-space: nowrap; border-bottom: 2px solid #aeaeae; }
.control .box { margin-top: 4px; }
.dock-title.lower svg { margin-top: -2px; }
.dock-title.lower h2 { margin-top: -1px; }
.layer-tools {
  flex: none;
  height: 56px;
  display: flex;
  align-items: center;
  padding: 3px 0 0 13px;
  border-top: 2px solid #fff;
  border-bottom: 2px solid #aeaeae;
  background: linear-gradient(#ededed, #c8c8c8);
}
.group { width: 30px; height: 32px; margin-right: 29px; }
.eye { width: 36px; height: 30px; margin-right: 26px; }
.funnel { width: 28px; height: 32px; margin-right: 46px; }
.eps { width: 30px; height: 34px; margin-right: 2px; overflow: visible; }
.epsilon { font: 36px "Liberation Serif", serif; fill: #aa8fae; }
.layer-tools .drop { margin-top: 16px; }
.layer-tools .more { width: 22px; height: 16px; margin-left: 41px; }
.tree { flex: 1; margin-top: 20px; padding: 0 2px; background: #fff; border: 0 solid #b0b0b0; border-width: 2px 0; }
.tree-row { height: 40px; display: flex; align-items: center; padding-left: 54px; background: #0a50d2; color: #fff; }
.layer-icon { width: 32px; height: 32px; margin: 0 12px 0 26px; }
.tree-row b { font-size: 26px; line-height: 27px; border-bottom: 2px solid #fff; margin-top: 2px; }

.map { flex: 1; padding-left: 412px; background: #fff; border: 2px solid #b4b4b4; border-top-color: #8e8e8e; border-left-color: #c2c2c2; }
.map canvas { display: block; width: 364px; height: 1112px; image-rendering: pixelated; }

/* status bar */
.status { flex: 1; display: flex; align-items: flex-start; padding-top: 14px; }
.status > * { flex: none; }
.lbl { line-height: 30px; margin-top: 9px; white-space: nowrap; }
.coord { padding-left: 52px; width: 186px; }
.field { height: 44px; margin-top: 4px; border: 2px solid #b9b9b9; background: #fff; line-height: 38px; white-space: nowrap; }
.coordinate { width: 254px; padding-left: 14px; }
.mouse { width: 40px; height: 54px; padding: 8px 3px; border: 2px solid #b0b0b0; background: linear-gradient(#e4e4e4, #fafafa); }
.mouse svg { width: 30px; height: 34px; }
.scale { width: 102px; padding-left: 18px; }
.combo {
  width: 236px;
  height: 44px;
  margin-top: 2px;
  padding-left: 4px;
  display: flex;
  justify-content: space-between;
  line-height: 45px;
  border: solid #b9b9b9;
  border-width: 2px 0 0 2px;
  border-radius: 0 6px 6px 0;
  background: linear-gradient(90deg, #fff 200px, #ebebeb 200px);
}
.combo i { width: 36px; height: 42px; margin-top: -2px; border-radius: 0 6px 6px 0; background: linear-gradient(#6cb1fa, #1a7dfe 90%, #0e63f6); }
.rotation { width: 136px; padding-left: 18px; }
.rotate { width: 176px; display: flex; justify-content: space-between; padding: 2px 2px 2px 4px; line-height: 34px; }
.rotate i { width: 84px; background: #ebebeb; }
.stepper { width: 26px; height: 46px; margin: 4px 14px 0 6px; }
.status .box { margin-top: 13px; }
.render { width: 98px; padding-left: 8px; }
.button { height: 36px; margin-top: 8px; border: 2px solid #b1b1b1; background: linear-gradient(#e3e3e3, #f6f6f6); display: flex; line-height: 30px; }
.button svg { width: 32px; height: 32px; }
.epsg { width: 214px; padding-left: 8px; gap: 9px; line-height: 29px; }
.message { width: 76px; margin-left: 12px; padding-left: 8px; }
.resize { width: 22px; height: 22px; margin: 44px 0 0 30px; }
```
FILE: scene.js
```
// Paints the satellite strip as one cell per raster pixel.
(function () {
  var canvas = document.getElementById('scene');
  var W = canvas.width, H = canvas.height;
  var ctx = canvas.getContext('2d');
  var img = ctx.createImageData(W, H);
  var seed = 20160514;
  function rnd() {
    seed = (seed + 0x6D2B79F5) | 0;
    var t = Math.imul(seed ^ (seed >>> 15), 1 | seed);
    t = (t + Math.imul(t ^ (t >>> 7), 61 | t)) ^ t;
    return ((t ^ (t >>> 14)) >>> 0) / 4294967296;
  }
  function grid(step) {
    var w = Math.ceil(W / step) + 2, h = Math.ceil(H / step) + 2, a = [];
    for (var i = 0; i < w * h; i++) a.push(rnd());
    return function (x, y) {
      var gx = x / step, gy = y / step, ix = gx | 0, iy = gy | 0, fx = gx - ix, fy = gy - iy;
      var p = iy * w + ix;
      return (a[p] * (1 - fx) + a[p + 1] * fx) * (1 - fy) + (a[p + w] * (1 - fx) + a[p + w + 1] * fx) * fy;
    };
  }
  var n3 = grid(3), n9 = grid(9), n9b = grid(8), n22 = grid(22);

  var coast = [[57,0],[50,10],[46,14],[54,25],[59,38],[59,51],[54,63],[47,73],[46,83],[43,89],[45,103],[48,113],[53,129],[58,146],[63,161],[68,183],[75,198],[82,213],[86,224],[86,256],
    [87,276],[89,293],[93,304],[94,320],[85,329],[80,339],[73,353],[68,364],[67,372],[52,383],[38,403],[34,416],[36,426],[36,436],[32,441],[35,451],[37,464],[31,473],[34,488],[37,501],[37,516],[34,526],[35,533],[36,556]];
  function coastX(y) {
    for (var i = 1; i < coast.length; i++) {
      if (y <= coast[i][1]) {
        var a = coast[i - 1], b = coast[i];
        return a[0] + (b[0] - a[0]) * (y - a[1]) / (b[1] - a[1]);
      }
    }
    return 36;
  }
  function inside(p, x, y) {
    var c = false;
    for (var i = 0, j = p.length - 1; i < p.length; j = i++) {
      if ((p[i][1] > y) !== (p[j][1] > y) && x < (p[j][0] - p[i][0]) * (y - p[i][1]) / (p[j][1] - p[i][1]) + p[i][0]) c = !c;
    }
    return c;
  }
  function near(line, x, y) {
    var best = 1e9;
    for (var i = 1; i < line.length; i++) {
      var a = line[i - 1], b = line[i], dx = b[0] - a[0], dy = b[1] - a[1];
      var t = Math.max(0, Math.min(1, ((x - a[0]) * dx + (y - a[1]) * dy) / (dx * dx + dy * dy)));
      var r = a[2] + (b[2] - a[2]) * t;
      best = Math.min(best, Math.hypot(x - a[0] - dx * t, y - a[1] - dy * t) - r);
    }
    return best;
  }
  var mangrove = [[98,-4],[164,-4],[170,12],[169,24],[163,33],[153,40],[146,46],[145,55],[150,66],[140,60],[130,51],[112,48],[96,45],[92,40],[95,14]];
  var upland = [[98,-4],[120,-4],[128,14],[132,30],[126,38],[108,36],[100,44],[92,36],[96,14]];
  var salt = [[144,49],[150,45],[163,41],[163,30],[170,22],[190,28],[190,58],[172,60],[170,66],[163,68],[154,60],[145,56]];
  var rivers = [
    [[96,0,4],[91,17,3],[88,30,3],[91,45,2.5],[89,56,2.2],[84,66,1.6],[82,76,1.3],[71,82,1],[71,98,.8],[73,112,.3]],
    [[91,42,1.2],[105,46,1.2],[118,48,1.4],[130,43,1]],
    [[57,0,2.5],[48,10,1.8],[38,16,1.2]],
    [[57,115,.2],[59,125,.8],[61,138,.4]]
  ];
  var creek = [[130,43,.5],[134,32,.6],[127,16,1.8],[117,0,2.5]];
  // Open ground: x, y, rx, ry, red, green, blue
  var patches = [
    [122,62,32,14,88,55,40],[108,74,20,6,72,46,34],[110,199,23,15,72,46,35],[92,342,16,10,86,51,35],[113,346,16,13,88,52,36],
    [135,348,6,15,106,64,47],[143,334,9,8,110,66,47],[86,379,18,9,82,49,35],[49,396,13,12,94,61,44],[70,385,20,6,86,52,36],
    [45,465,8,7,100,62,44],[90,466,30,9,90,55,40],[85,490,26,10,80,49,35],[70,502,8,8,158,93,62],[66,525,16,10,108,66,48],
    [42,528,10,5,110,66,47],[162,426,28,26,78,46,36],[135,464,35,10,66,44,32],[157,360,11,7,22,29,20],[165,347,11,5,29,27,19],
    [72,131,9,6,45,44,21],[117,478,4,9,122,102,87],[135,318,24,6,80,50,38]
  ];
  var clusters = [[113,192,9,4],[115,196,8,3],[150,80,12,5],[153,250,14,20],[122,299,9,6],[158,291,4,4],[56,440,14,4],[74,408,14,10],[108,451,6,3],[42,412,8,6],[122,529,9,4],[100,82,9,3],[143,162,16,8]];

  for (var row = 0; row < H; row++) {
    // feature tables use their own vertical scale above and below row 276
    var y = row < 276 ? (row - .286) / 1.0714 : 276 + (row - 276) / 1.0909;
    var edge = coastX(y) + (rnd() - .5) * .7;
    for (var x = 0; x < W; x++) {
      var r, g, b, a = 255, n = rnd(), q = rnd();
      var d = edge - x;
      if (d > 0) {
        // water: deep navy offshore, green shallows by the beach
        var north = Math.max(0, 1 - y / 240);
        var width = y < 60 ? 17 : y < 250 ? 17 + Math.min(15, (y - 60) / 7) : y < 330 ? 26 - (y - 250) / 8 : 15;
        var s = Math.pow(Math.max(0, 1 - d / width), 1.15);
        s *= y < 200 ? .8 : y < 260 ? .8 - (y - 200) / 150 : y < 325 ? .35 : y < 400 ? .15 : .35;
        s *= .6 + n9(x, row) * .8;
        r = 1 + north * 2; g = 4 + north * 5 + s * 58; b = 12 + north * 3 + s * 35;
        var j = (n - .5) * (north * 14 + s * 42 + 3);
        g += j; b += j;
        if (y < 85 && d > 3) { var dim = 1 - y / 85; g += 20 * dim * n9(x, row); b += 17 * dim * n9(x, row); }
        if (q < .1 * north * (1.2 - x / 90) + (y < 250 ? .008 : .0006)) { r += 12 + n * 40; g += 22 + n * 50; b += 40 + n * 60; }
        if (s > .06 && y > 60 && y < 240 && q > .93) { g += 20 + n * n * 110; b += 12 + n * n * 90; }
        if (y > 206 && y < 234 && d > 2 && d < 24 && q > .93) { r = 5; g = 110 + n * 140; b = 95 + n * 130; }
        if (y > 240 && s > .06 && q > .88) { g += 40 * n; b += 40 * n; }
        if (y < 18 && near(rivers[2], x, y) < 0) { r = 1; g = 12 + n * 10; b = 16; }
      } else {
        // built-up ground: brown base with roofs as bright cells
        var south = y < 300 ? 0 : Math.max(0, Math.min(1, (y - 340) / 160 + (x - 110) / 230));
        var urban = (1 - south * .97) * (.5 + .7 * n22(x, row));
        if (y > 395 && y < 465 && x < 130) urban = Math.max(urban, .6);
        if (y > 475 && y < 510 && x < 66) urban = .8;
        if (y < 25 && x < 88) urban *= .6;
        var open = 0, pr = 0, pg = 0, pb = 0;
        for (var p = 0; p < patches.length; p++) {
          var o = patches[p], e = Math.hypot((x - o[0]) / o[2], (y - o[1]) / o[3]);
          e += (n9(x, row) - .5) * .9 + (n3(x, row) - .5) * .35;
          if (e < 1) { open = Math.min(1, (1 - e) * 2); pr = o[4]; pg = o[5]; pb = o[6]; }
        }
        var m = .42 + n * .9 + (n9b(x, row) - .5) * .3 + (n3(x, row) - .5) * .25;
        r = 74 * m; g = 55 * m; b = 44 * m;
        if (south > .1) { r = 79 * m; g = 52 * m; b = 38 * m; }
        var shade = Math.sin((x * .35 + row) / 7 + n9(x, row) * 5);
        if (south > .35 && shade > .4) { r *= .72; g *= .78; b *= .8; }
        if (n22(x, row) * n9(x, row) > .5) { r *= .65; g *= .85; b *= .7; }
        var hit = q < .27 * urban;
        for (var c = 0; c < clusters.length; c++) {
          if (Math.hypot((x - clusters[c][0]) / clusters[c][2], (y - clusters[c][1]) / clusters[c][3]) < .6 + n3(x, row) * .7 && q < .38) hit = true;
        }
        if (hit) {
          var v = 90 + Math.pow(rnd(), 2.8) * 165, w = rnd();
          r = v; g = v * (.82 + w * .15); b = v * (.73 + w * .25);
        } else if (q < .3 * urban) { r = 95 + n * 55; g = 38; b = 30; }
        else if (q > .97) { r = 36; g = 52; b = 22; }
        else if (q > .962 && urban > .5) { r = 62; g = 75; b = 92; }
        if (open > 0 && !(hit && q < .035)) {
          var t = .8 + n * .38;
          r = r * (1 - open) + pr * open * t; g = g * (1 - open) + pg * open * t; b = b * (1 - open) + pb * open * t;
        }
        if (y < 76) {
          var jx = x + (n9(x, row) - .5) * 9 + (n - .5) * 2, jy = y + (n9b(x, row) - .5) * 9 + (q - .5) * 2;
          if (inside(mangrove, jx, jy)) { r = 23 + n * 12; g = 24 + n * 9; b = 15 + n * 6; }
          if (y > 50 && x > 138 && near([[138,52,2],[150,64,3],[166,72,2]], x, jy) < 0) { r = 30 + n * 20; g = 26 + n * 14; b = 20; }
          if (inside(upland, jx, jy)) {
            r = 33 + n * 24; g = 27 + n * 15; b = 21 + n * 10;
            if (jx < 106 && jy > 14) { r += 35; g += 20; b += 15; }
          }
          if (Math.hypot((jx - 117) / 11, (jy - 39) / 5) < 1) { r = 85 + n * 30; g = 57 + n * 20; b = 43 + n * 15; }
          if (near(creek, x + (n - .5) * 3, y) < n) { r = 12 + n * 9; g = 18 + n * 10; b = 16 + n * 7; }
          if (inside(salt, x + (n3(x, row) - .5) * 3, y + (n - .5) * 2)) {
            var stripe = Math.sin((x * .7 - y) * .95) * 22 * n9(x, row) + (n3(x, row) - .5) * 50, tone = n9b(x, row);
            r = 150 + stripe + n * 34; g = 115 + stripe + tone * 12 + n * 28; b = 96 + stripe + tone * 8 + n * 28;
          }
          if (y < 30 && x > 171 && !inside(salt, x, y)) { r = 72 + n * 40; g = 46 + n * 25; b = 35 + n * 20; }
          if (Math.hypot((jx - 170) / 3, (y - 11) / 3) < 1 || Math.hypot((x - 84) / 2.5, (jy - 39) / 6) < 1 || Math.hypot((x - 95) / 1.8, (y - 50) / 3) < 1) { r = 170 + n * 50; g = 132 + n * 45; b = 110 + n * 45; }
        }
        for (var k = 0; k < rivers.length; k++) {
          if (near(rivers[k], x, y) < n * .8 - .3) { r = 5 + n * 5; g = 19 + n * 14; b = 18 + n * 10; }
        }
        if (d > -1.5 && y > 12) {
          var sand = y > 320 && y < 402 ? .5 : .9;
          r = (125 + n * 70) * sand; g = (92 + n * 52) * sand; b = (68 + n * 42) * sand;
        }
      }
      if ((x < 1 && y < 88) || (x > 180 && y < 230)) a = 0;
      var i = (row * W + x) * 4;
      img.data[i] = r; img.data[i + 1] = g; img.data[i + 2] = b; img.data[i + 3] = a;
    }
  }
  ctx.putImageData(img, 0, 0);
})();
```
